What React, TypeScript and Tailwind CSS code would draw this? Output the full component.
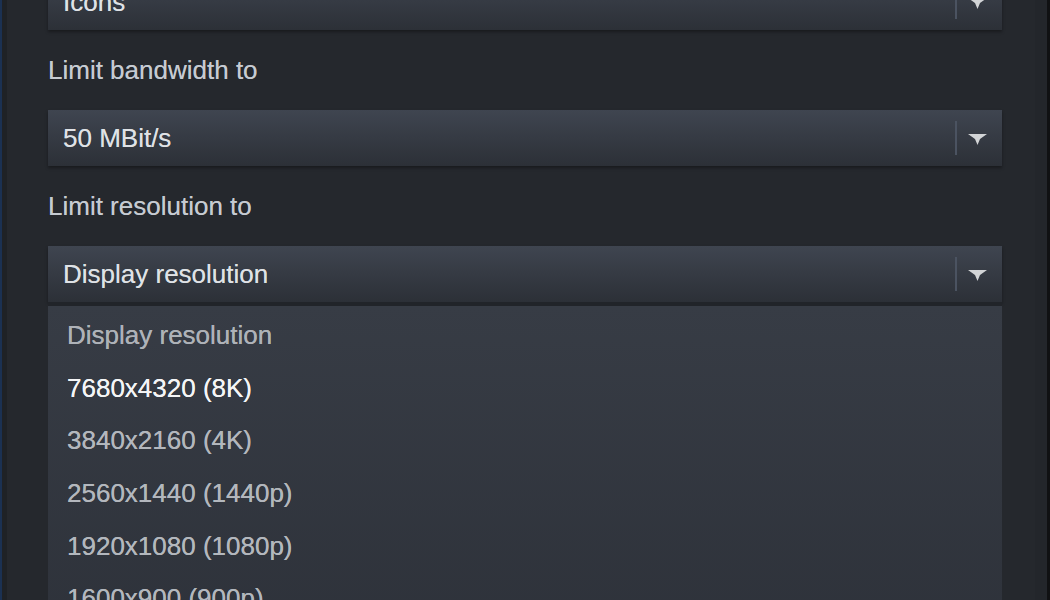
import React from "react";

function Caret() {
  return (
    <svg width="19" height="11" viewBox="0 0 19 11" className="block">
      <polygon points="0,0 19,0 12,5 9.5,11 7,5" fill="#d2d4d6" />
    </svg>
  );
}

function Select({ value }: { value: string }) {
  return (
    <div className="flex h-[56px] w-[954px] shrink-0 bg-gradient-to-b from-[#3f4550] to-[#2c3037] shadow-[0_2px_3px_rgba(0,0,0,0.35)]">
      <div className="flex flex-1 items-center pl-[15px] text-[26px] leading-[30px] text-[#dfe2e6] [text-shadow:0_0_0.6px_rgba(223,226,230,0.7)]">
        {value}
      </div>
      <div className="flex items-center">
        <div className="h-[34px] w-[2px] bg-[#4b5361]" />
      </div>
      <div className="flex w-[45px] items-center justify-center pr-[4px] pt-[2px]">
        <Caret />
      </div>
    </div>
  );
}

function Label({ text }: { text: string }) {
  return (
    <div className="pt-[25px] pb-[25px] text-[26px] leading-[30px] text-[#c6cbd2] [text-shadow:0_0_0.6px_rgba(198,203,210,0.7)]">
      {text}
    </div>
  );
}

const items = [
  { t: "Display resolution", c: "text-[#aeb2b8]" },
  { t: "7680x4320 (8K)", c: "text-[#f4f5f6]" },
  { t: "3840x2160 (4K)", c: "text-[#b3b7bd]" },
  { t: "2560x1440 (1440p)", c: "text-[#b3b7bd]" },
  { t: "1920x1080 (1080p)", c: "text-[#b3b7bd]" },
  { t: "1600x900 (900p)", c: "text-[#b3b7bd]" },
];

export default function App() {
  return (
    <div className="flex h-[600px] w-[1050px] overflow-hidden bg-[#25282d] font-['Liberation_Sans',Arial,sans-serif]">
      <div className="w-[2px] shrink-0 bg-[#1b3152]" />
      <div className="w-[5px] shrink-0 bg-[#1f2226]" />
      <div className="flex flex-1 flex-col pl-[41px]">
        <div className="mt-[-26px]">
          <Select value="Icons" />
        </div>
        <Label text="Limit bandwidth to" />
        <Select value="50 MBit/s" />
        <Label text="Limit resolution to" />
        <div className="flex w-[954px] flex-col">
          <Select value="Display resolution" />
          <div className="h-[4px] bg-[#212429]" />
          <div className="flex h-[400px] flex-col bg-gradient-to-b from-[#373c45] to-[#2c3038] pt-[3px] pl-[19px]">
            {items.map((it) => (
              <div
                key={it.t}
                className={`flex h-[52.6px] shrink-0 items-center text-[26px] leading-[30px] [text-shadow:0_0_0.6px_currentColor] ${it.c}`}
              >
                {it.t}
              </div>
            ))}
          </div>
        </div>
      </div>
      <div className="w-[12px] shrink-0 bg-[#23262b]" />
      <div className="w-[3px] shrink-0 bg-[#101113]" />
    </div>
  );
}
